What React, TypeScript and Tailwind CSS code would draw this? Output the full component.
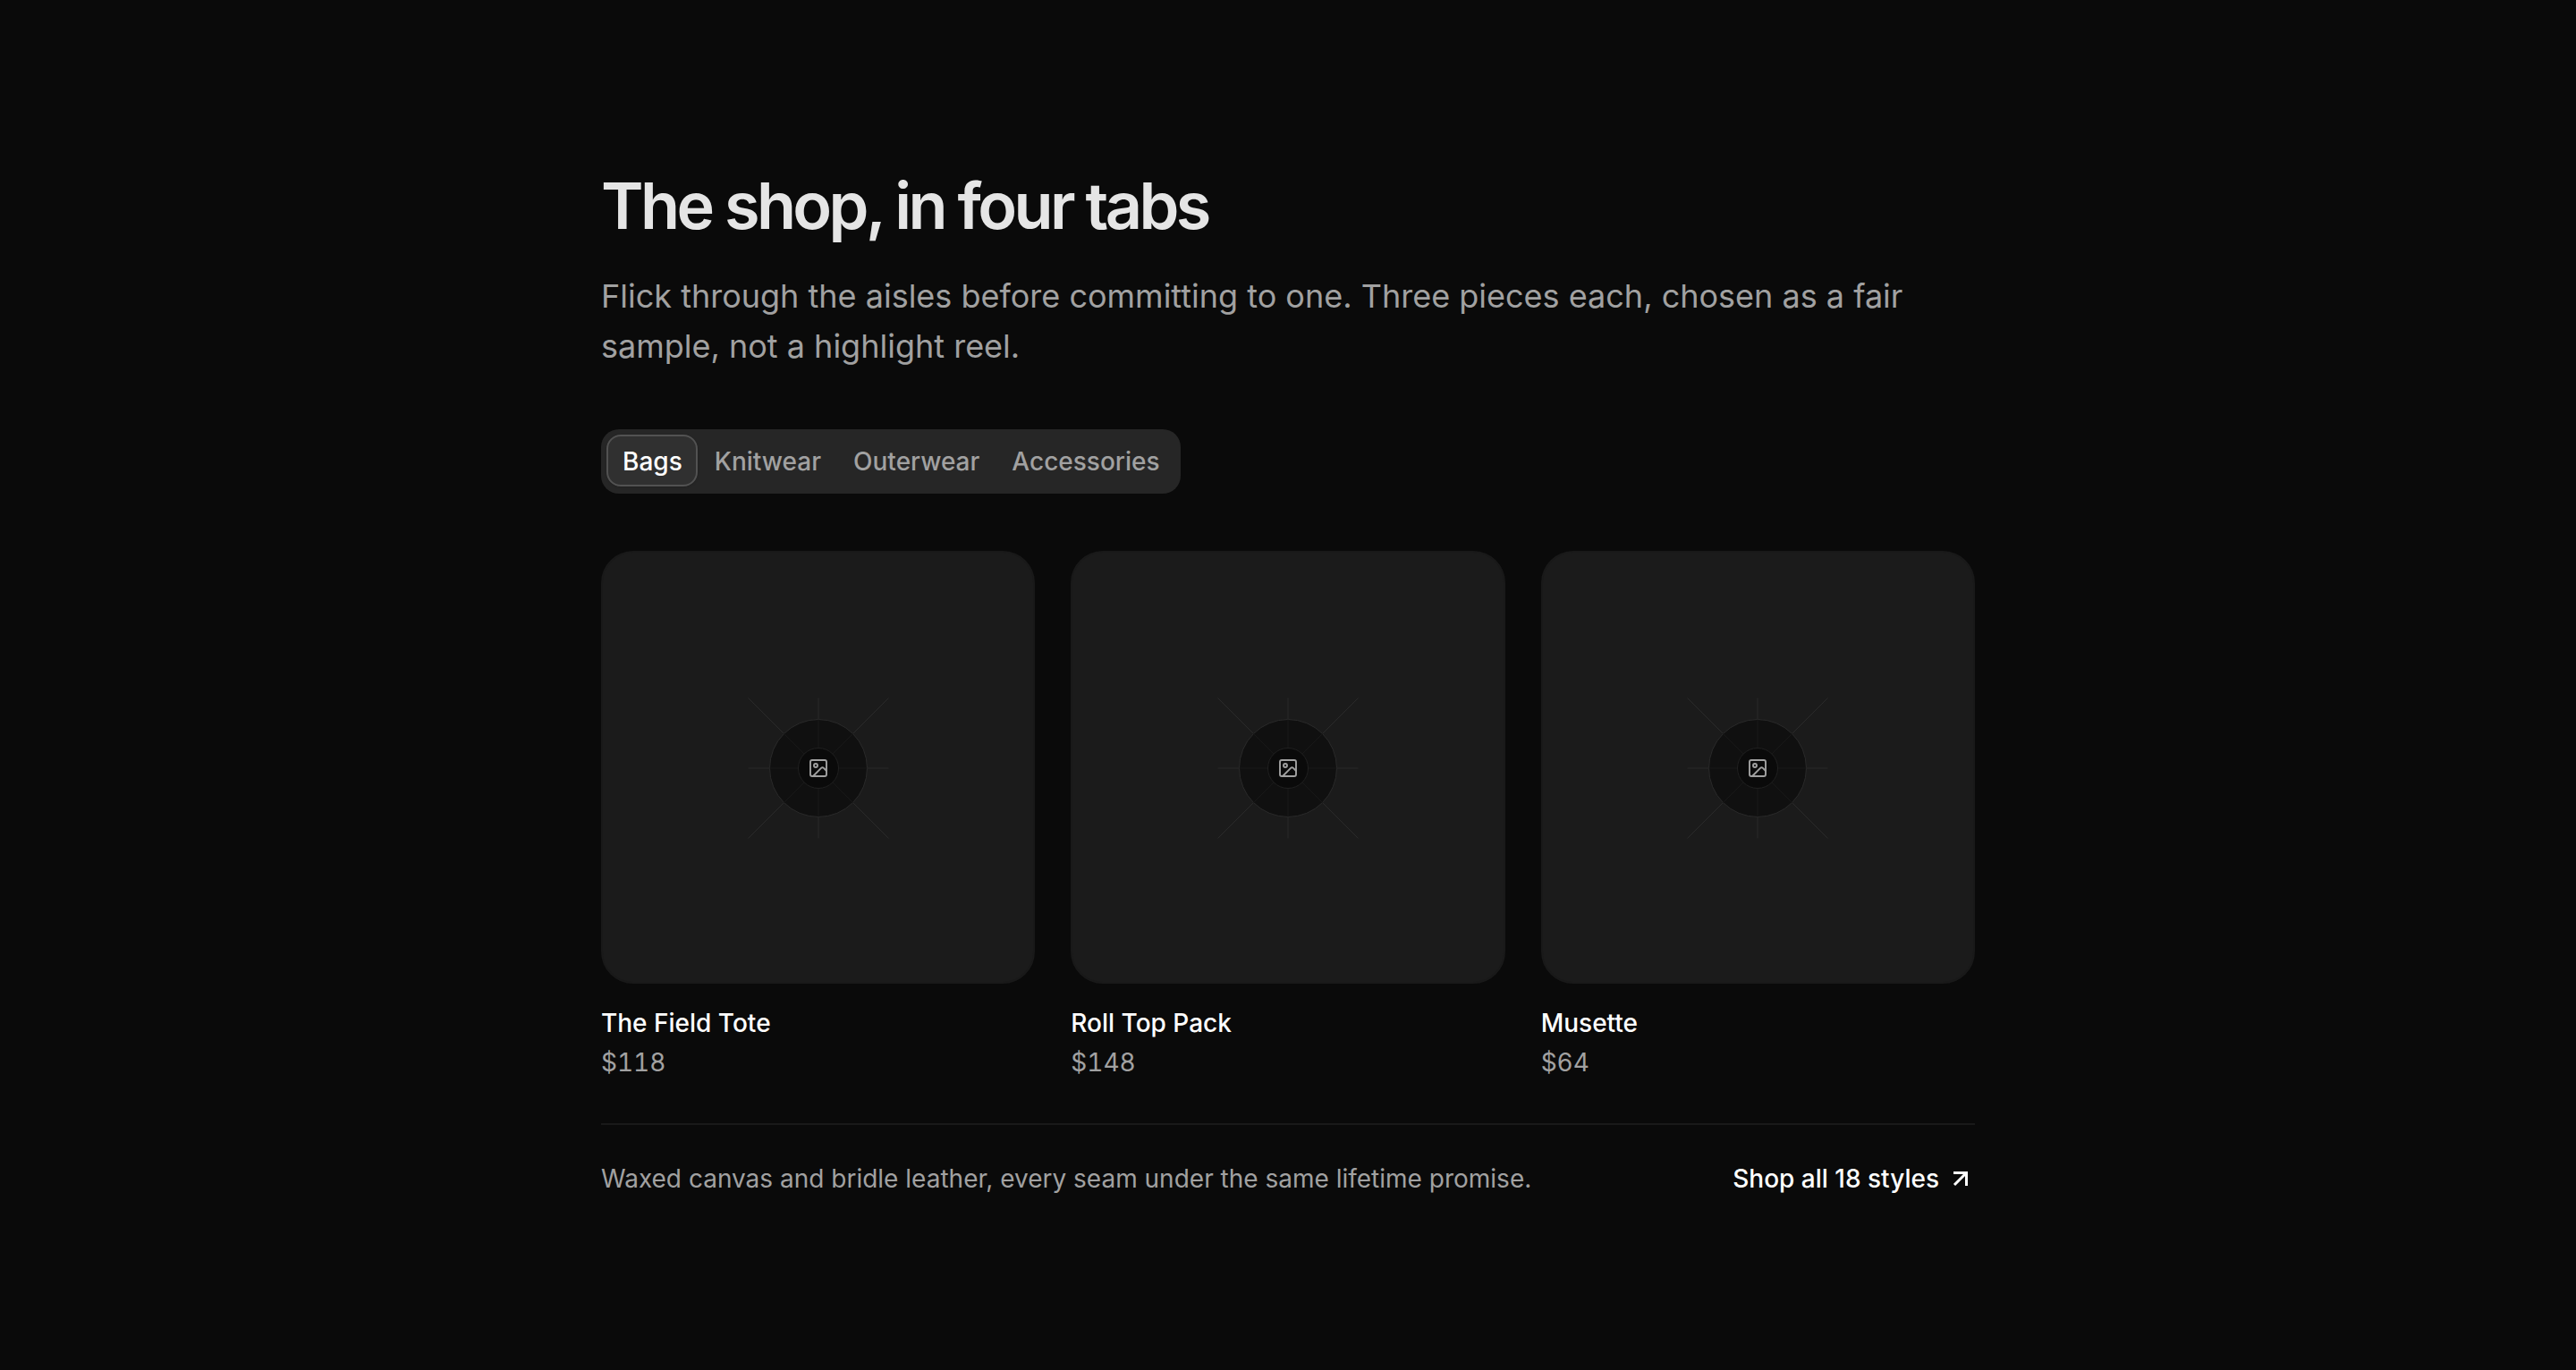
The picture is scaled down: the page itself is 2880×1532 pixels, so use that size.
import React, { useState } from 'react';
import { Image as ImageIcon } from 'lucide-react';

const tabs = ['Bags', 'Knitwear', 'Outerwear', 'Accessories'];

const products = [
  { name: 'The Field Tote', price: '$118' },
  { name: 'Roll Top Pack', price: '$148' },
  { name: 'Musette', price: '$64' },
];

const ArrowIcon: React.FC = () => {
  return (
    <svg width="32" height="32" viewBox="0 0 32 32" fill="none" stroke="currentColor" strokeWidth="3">
      <path d="M8 9.5H22.5V24" />
      <path d="M9 23L22.5 9.5" />
    </svg>
  );
};

const Placeholder: React.FC = () => {
  return (
    <div className="h-[484px] rounded-[36px] border-2 border-[#191919] bg-[#1b1b1b] flex items-center justify-center">
      <div className="grid place-items-center pt-px">
        <svg
          className="col-start-1 row-start-1 w-[158px] h-[158px]"
          viewBox="0 0 158 158"
          fill="none"
          stroke="#2a2a2a"
          strokeWidth="1"
        >
          <path d="M79 0.5v157M0.5 79h157M0.5 0.5l157 157M157.5 0.5l-157 157" />
          <circle cx="79" cy="79" r="54.5" fill="#101010" />
          <path d="M79 24.5v109M24.5 79h109M40.5 40.5l77 77M117.5 40.5l-77 77" stroke="#181818" />
          <circle cx="79" cy="79" r="22.5" fill="#0a0a0a" stroke="#202020" />
        </svg>
        <ImageIcon className="col-start-1 row-start-1 text-[#a1a1a1]" size={24} strokeWidth={1.9} />
      </div>
    </div>
  );
};

const ProductCard: React.FC<{ name: string; price: string }> = ({ name, price }) => {
  return (
    <div>
      <Placeholder />
      <h3 className="mt-6 text-[28px] leading-10 font-medium text-white">{name}</h3>
      <p className="mt-1 text-[28px] leading-10 text-[#a1a1a1] tabular-nums">{price}</p>
    </div>
  );
};

const App: React.FC = () => {
  const [active, setActive] = useState('Bags');

  return (
    <div className="min-h-screen bg-[#0a0a0a] font-['Inter',sans-serif]">
      <section className="mx-auto w-[1536px] pt-48">
        <h2 className="text-[72px] leading-[76px] font-semibold tracking-[-0.05em] text-[#e5e5e5]">
          The shop, in four tabs
        </h2>
        <p className="mt-[35px] text-[36px] leading-[56px] text-[#a1a1a1]">
          Flick through the aisles before committing to one. Three pieces each, chosen as a fair
          sample, not a highlight reel.
        </p>

        <div className="mt-[65px] inline-flex h-[72px] rounded-[20px] bg-[#262626] py-[6px] pr-[5px] pl-[6px]">
          {tabs.map((tab) => (
            <button
              key={tab}
              onClick={() => setActive(tab)}
              className={
                tab === active
                  ? 'mr-px h-[58px] rounded-[16px] border-2 border-[#525252] bg-[#303030] pr-[15px] pl-4 pt-px text-[28px] leading-10 font-medium text-white shadow-sm'
                  : 'h-[58px] rounded-[16px] border-2 border-transparent px-4 pt-px text-[28px] leading-10 font-medium text-[#a1a1a1]'
              }
            >
              {tab}
            </button>
          ))}
        </div>

        <div className="mt-16 grid grid-cols-3 gap-10">
          {products.map((product) => (
            <ProductCard key={product.name} name={product.name} price={product.price} />
          ))}
        </div>

        <div className="mt-12 flex items-center justify-between border-t-2 border-[#191919] pt-10">
          <p className="text-[28px] leading-10 text-[#a1a1a1]">
            Waxed canvas and bridle leather, every seam under the same lifetime promise.
          </p>
          <a href="#" className="flex items-center gap-2 text-[28px] leading-10 font-medium text-white">
            Shop all 18 styles
            <ArrowIcon />
          </a>
        </div>
      </section>
    </div>
  );
};

export default App;
